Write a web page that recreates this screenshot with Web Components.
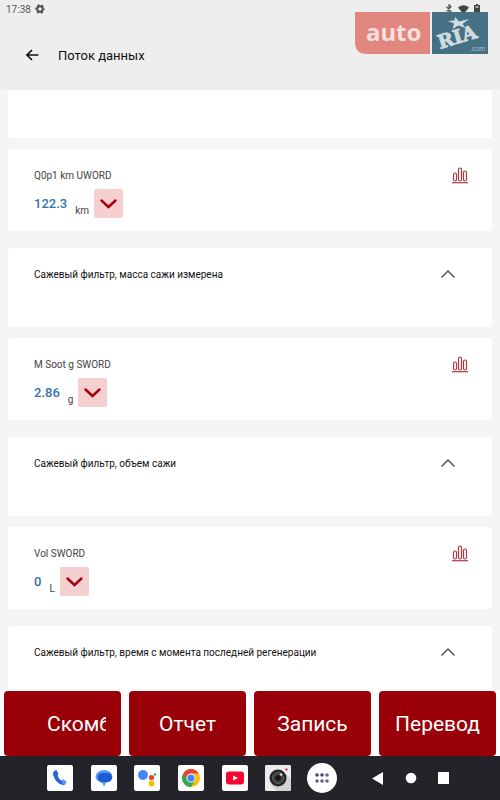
<!DOCTYPE html>
<html lang="ru">
<head>
<meta charset="utf-8">
<title>Поток данных</title>
<style>
  html, body { margin: 0; height: 100%; }
  body { font-family: Roboto, "Noto Sans", sans-serif; color: #1c1c1c; }
</style>
</head>
<body>
<data-stream-app></data-stream-app>
<script>
function define(name, css, html) {
  customElements.define(name, class extends HTMLElement {
    connectedCallback() {
      if (this.shadowRoot) return;
      const t = document.createElement('template');
      t.innerHTML = `<style>*{box-sizing:border-box}:host{display:block;box-sizing:border-box}button{font:inherit;border:0;margin:0;padding:0;background:none;display:block}svg{display:block}${css}</style>` +
        (typeof html === 'function' ? html(this) : html);
      this.attachShadow({ mode: 'open' }).append(t.content.cloneNode(true));
    }
  });
}

define('status-bar', `
  :host { display:flex; align-items:center; height:18px; padding:0 20px 0 6px; font-size:10px; color:#555; }
  .gear { margin-left:4px; }
  .right { margin-left:auto; display:flex; align-items:center; gap:5px; }
`, `
  <span>17:38</span>
  <svg class="gear" width="10" height="10" viewBox="0 0 20 20" fill="none" stroke="#505050"><circle cx="10" cy="10" r="5.5" stroke-width="4"/><circle cx="10" cy="10" r="8.3" stroke-width="2.6" stroke-dasharray="4.4 4.29" stroke-dashoffset="2.2"/></svg>
  <span class="right">
    <svg width="8" height="10" viewBox="0 0 8 10" fill="none" stroke="#555" stroke-width="1.2"><path d="M1.5 2.8 6 7.2 4 9.3V.7L6 2.8 1.5 7.2"/></svg>
    <svg width="11" height="9" viewBox="0 0 11 9" fill="#444"><path d="M0 2.5Q5.5-2 11 2.5L5.5 9Z"/></svg>
    <svg width="6" height="10" viewBox="0 0 6 10" fill="#444"><path d="M2 0h2v1h2v9H0V1h2Z"/><path d="M1.5 2h3v2h-3Z" fill="#aaa"/></svg>
  </span>
`);

define('app-header', `
  :host { display:flex; align-items:flex-start; height:72px; padding:25px 24px 0; gap:18px; }
  button { width:16px; height:16px; margin-top:4px; }
  h1 { margin:0; font-size:13px; font-weight:400; line-height:20px; color:#111; padding-top:3px; }
`, `
  <button aria-label="Назад"><svg width="16" height="16" viewBox="0 0 16 16" fill="none" stroke="#111" stroke-width="1.7"><path d="M14.5 8H3M8 3 3 8l5 5"/></svg></button>
  <h1><slot></slot></h1>
`);

define('ria-badge', `
  :host { position:absolute; top:12px; right:12px; }
`, `
  <svg width="133" height="42" viewBox="0 0 133 42" role="img" aria-label="auto RIA .com">
    <path d="M0 0H75V42H12Q0 42 0 30Z" fill="#e2877f"/>
    <path d="M77 0H133V42H77Z" fill="#467083"/>
    <text x="11" y="29" font-family="Noto Sans, sans-serif" font-weight="700" font-size="24" fill="#f8dfdc">auto</text>
    <g transform="translate(85 37) rotate(-17)" fill="#cfdbe1" stroke="#cfdbe1" stroke-width=".8" font-family="DejaVu Serif, serif" font-weight="700" font-size="19"><text x="0" y="0">R</text><text x="16" y="0">I</text><text x="25" y="0">A</text></g>
    <path d="M100 5l4 4.500 10-2.500-6.500 5 3 4-7-2.500-6 3.500 1.500-5.500-6-2.500 6.500-.5Z" fill="#cfdbe1"/>
    <text x="115" y="39" font-family="Liberation Sans, sans-serif" font-size="7" fill="#a9c0ca">.com</text>
  </svg>
`);

define('group-card', `
  :host { background:#fff; border-radius:3px; height:79px; flex:none; padding:0 36px 0 26px; }
  .row { display:flex; justify-content:space-between; align-items:center; height:52px; }
  h2 { margin:0; font-size:10px; font-weight:400; color:#111; }
`, `
  <div class="row"><h2><slot></slot></h2>
  <button aria-label="Свернуть"><svg width="16" height="10" viewBox="0 0 16 10" fill="none" stroke="#555" stroke-width="1.5"><path d="M1.5 8.5 8 2l6.500 6.500"/></svg></button></div>
`);

define('value-card', `
  :host { background:#fff; border-radius:3px; height:82px; flex:none; padding:18px 24px 0 26px; display:flex; justify-content:space-between; align-items:flex-start; }
  .label { font-size:10px; line-height:18px; color:#444; }
  .line { display:flex; margin-top:4px; align-items:flex-start; }
  .value { font-size:13px; line-height:30px; font-weight:500; color:#3272ac; }
  .unit { font-size:10px; line-height:16px; color:#444; margin:14px 5px 0 8px; }
  .drop { width:29px; height:29px; border-radius:2px; background:#f6cfd1; display:grid; place-items:center; }
`, el => `
  <div><div class="label"><slot></slot></div>
  <div class="line"><span class="value">${el.getAttribute('value')}</span><span class="unit">${el.getAttribute('unit')}</span>
  <button class="drop" aria-label="Развернуть"><svg width="17" height="12" viewBox="0 0 17 12" fill="none" stroke="#a8000c" stroke-width="2.4" stroke-linecap="round"><path d="M1.5 2.5 8.5 9l7-6.5"/></svg></button></div></div>
  <button aria-label="График"><svg width="16" height="17" viewBox="0 0 16 17" fill="none" stroke="#b03a42" stroke-width="1.2"><rect x="1.5" y="6" width="3" height="8" rx="1.5"/><rect x="6.5" y="1" width="3" height="13" rx="1.5"/><rect x="11.5" y="4" width="3" height="10" rx="1.5"/><path d="M0 15.7h16"/></svg></button>
`);

define('stream-list', `
  :host { flex:1; min-height:0; overflow:hidden; display:flex; flex-direction:column; gap:17px; padding:0 8px; background:#f5f5f5; }
  ::slotted(section) { display:flex; flex-direction:column; gap:11px; flex:none; }
`, `<slot></slot>`);

define('action-button', `
  :host { min-width:0; }
  button { width:100%; height:65px; border-radius:4px; background:#990007; color:#fff; font-size:21px; padding:0 15px; }
  span { display:block; overflow:hidden; white-space:nowrap; line-height:32px; }
  :host([scrolling]) button { padding-left:43px; }
  :host([scrolling]) span { text-align:left; }
`, `<button><span><slot></slot></span></button>`);

define('action-bar', `
  :host { display:grid; grid-template-columns:repeat(4,minmax(0,1fr)); gap:8px; padding:1px 4px 0; background:#fff; }
`, `<slot></slot>`);

define('app-tile', `
  button { width:26px; height:26px; border-radius:2px; background:#fff; overflow:hidden; }
  :host([round]) button { width:30px; height:30px; border-radius:50%; }
`, el => `<button aria-label="${el.getAttribute('label')}"><slot></slot></button>`);

define('system-dock', `
  :host { display:flex; justify-content:center; align-items:center; gap:18px; height:44px; padding-right:2px; background:#242329; }
  .apps { display:grid; grid-template-columns:repeat(7,1fr); width:306px; place-items:center; }
  .keys { display:grid; grid-template-columns:repeat(3,1fr); width:98px; place-items:center; }
`, `
  <div class="apps">
    <app-tile label="Телефон"><svg width="26" height="26" viewBox="0 0 26 26"><path d="M8 8Q9 16.500 17 18.500" fill="none" stroke="#2864df" stroke-width="3.800"/><path d="M6.100 8Q6.500 5.500 9.500 5L11.500 9 9.500 12 6.500 11Z" fill="#2864df"/><path d="m14.500 16 1.500-2 3.200 2.300Q19.500 20 16.500 20.500Z" fill="#6298f5"/></svg></app-tile>
    <app-tile label="Сообщения"><svg width="26" height="26" viewBox="0 0 26 26"><path d="M9 15h7l-3 7q-.5-4-4-7Z" fill="#5a96f7"/><ellipse cx="13" cy="11.500" rx="8.500" ry="6.500" fill="#5a96f7"/><rect x="7" y="8" width="14" height="9" rx="4.500" fill="#1b5bd4"/></svg></app-tile>
    <app-tile label="Ассистент"><svg width="26" height="26" viewBox="0 0 26 26"><circle cx="9" cy="10" r="4.900" fill="#4285f4"/><circle cx="17.500" cy="12.500" r="2.600" fill="#ea4335"/><circle cx="17.500" cy="18.500" r="2.900" fill="#fbbc04"/><circle cx="21" cy="9.500" r="1.300" fill="#34a853"/></svg></app-tile>
    <app-tile label="Chrome"><svg width="26" height="26" viewBox="0 0 26 26"><circle cx="13" cy="13" r="9" fill="#fbbc04"/><path d="M5.200 8.500A9 9 0 0 1 20.800 8.500H13L9.100 15.200Z" fill="#ea4335"/><path d="M5.200 8.500A9 9 0 0 0 13 22L16.900 15.200 9.100 15.200Z" fill="#34a853"/><circle cx="13" cy="13" r="4.500" fill="#fff"/><circle cx="13" cy="13" r="3.600" fill="#4285f4"/></svg></app-tile>
    <app-tile label="YouTube"><svg width="26" height="26" viewBox="0 0 26 26"><rect x="4" y="6.500" width="18" height="13" rx="3" fill="#f8062f"/><path d="m11 10.500 5 2.500-5 2.500Z" fill="#fff"/></svg></app-tile>
    <app-tile label="Камера"><svg width="26" height="26" viewBox="0 0 26 26"><path d="M0 0h26v26H0Z" fill="#ececec"/><path d="M20 8 26 14v12H12L6 20Z" fill="#d2d2d2"/><circle cx="13" cy="13" r="8.500" fill="#262626"/><circle cx="13" cy="13" r="5.500" fill="#3f3f3f" stroke="#626262"/><circle cx="13" cy="13" r="2.800" fill="#171717"/><circle cx="16" cy="9.500" r="1.300" fill="#ddd"/><circle cx="21.500" cy="4.500" r="1.200" fill="#d84355"/></svg></app-tile>
    <app-tile round label="Все приложения"><svg width="30" height="30" viewBox="0 0 30 30" fill="#5f6573"><circle cx="10" cy="12" r="1.800" fill="#3c4c86"/><circle cx="15" cy="12" r="1.800" fill="#3c4c86"/><circle cx="20" cy="12" r="1.800" fill="#80607f"/><circle cx="10" cy="18" r="1.800"/><circle cx="15" cy="18" r="1.800"/><circle cx="20" cy="18" r="1.800"/></svg></app-tile>
  </div>
  <div class="keys">
    <button aria-label="Назад"><svg width="12" height="13" viewBox="0 0 12 13" fill="#fff"><path d="M0 6.500 11 0v13Z"/></svg></button>
    <button aria-label="Домой"><svg width="12" height="12" viewBox="0 0 12 12" fill="#fff"><circle cx="6" cy="6" r="5.300"/></svg></button>
    <button aria-label="Обзор"><svg width="11" height="12" viewBox="0 0 11 12" fill="#fff"><path d="M0 0h11v12H0Z"/></svg></button>
  </div>
`);

define('data-stream-app', `
  :host { position:relative; display:flex; flex-direction:column; height:100vh; background:#eee; overflow:hidden; }
  .rest { height:48px; background:#fff; border-radius:0 0 3px 3px; flex:none; }
`, `
  <status-bar></status-bar>
  <app-header>Поток данных</app-header>
  <stream-list>
    <section><div class="rest"></div><value-card value="122.3" unit="km">Q0p1 km UWORD</value-card></section>
    <section><group-card>Сажевый фильтр, масса сажи измерена</group-card><value-card value="2.86" unit="g">M Soot g SWORD</value-card></section>
    <section><group-card>Сажевый фильтр, объем сажи</group-card><value-card value="0" unit="L">Vol SWORD</value-card></section>
    <section><group-card>Сажевый фильтр, время с момента последней регенерации</group-card></section>
  </stream-list>
  <action-bar>
    <action-button scrolling>Скомб</action-button>
    <action-button>Отчет</action-button>
    <action-button>Запись</action-button>
    <action-button>Перевод</action-button>
  </action-bar>
  <system-dock></system-dock>
  <ria-badge></ria-badge>
`);
</script>
</body>
</html>
